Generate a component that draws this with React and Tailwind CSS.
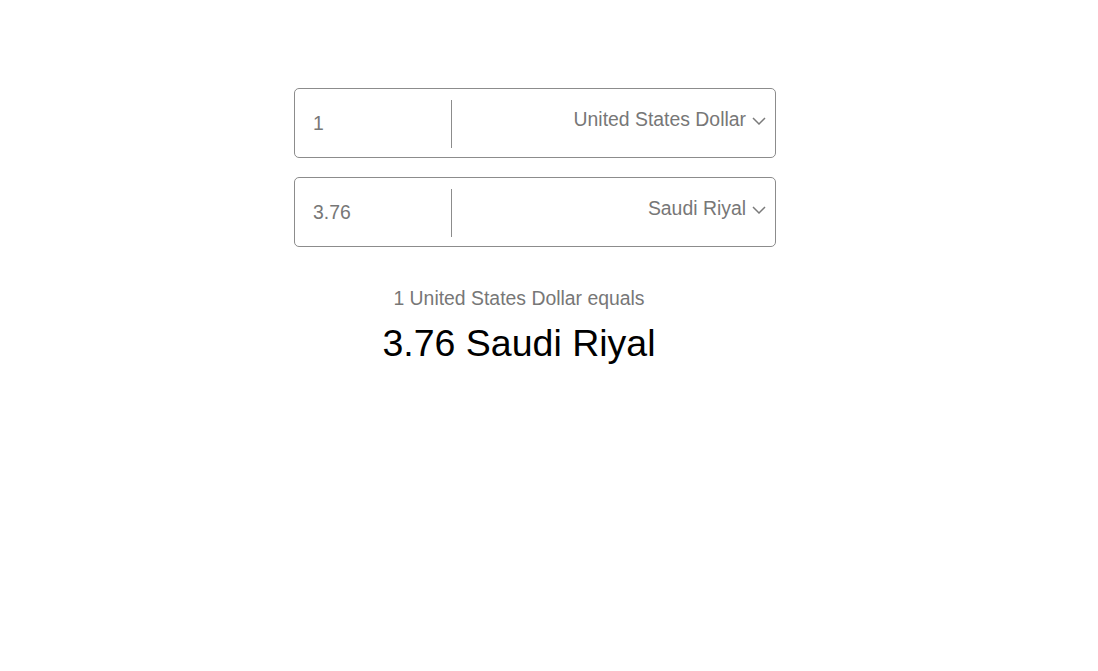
import { useState } from "react";

function Chevron() {
  return (
    <svg width="14" height="14" viewBox="0 0 14 14" fill="none" className="ml-[6px] mt-[1px]">
      <polyline points="1,4 7,10 13,4" stroke="#7a7a7a" strokeWidth="1.5" fill="none" />
    </svg>
  );
}

function Row({ amount, currency }) {
  return (
    <div className="flex h-[70px] w-[482px] rounded-[5px] border border-[#8c8c8c] bg-white">
      <div className="flex w-[156px] items-center pl-[18px] pt-[2px]">
        <input
          value={amount}
          readOnly
          className="w-full bg-transparent text-[19.4px] text-[#777] outline-none"
        />
      </div>
      <div className="mb-[9px] mt-[11px] border-l border-[#8c8c8c]" />
      <div className="flex flex-1 items-center justify-end pb-[6px] pr-[9px]">
        <span className="text-[19.4px] text-[#777]">{currency}</span>
        <Chevron />
      </div>
    </div>
  );
}

export default function App() {
  const [from] = useState({ amount: "1", currency: "United States Dollar" });
  const [to] = useState({ amount: "3.76", currency: "Saudi Riyal" });

  return (
    <div className="min-h-[671px] bg-white font-['Liberation_Sans',Arial,sans-serif]">
      <div className="ml-[294px] flex flex-col gap-[19px] pt-[88px]">
        <Row amount={from.amount} currency={from.currency} />
        <Row amount={to.amount} currency={to.currency} />
      </div>
      <div className="ml-[294px] mt-[39px] w-[450px] text-center">
        <p className="text-[19.4px] leading-[24px] text-[#777]">1 United States Dollar equals</p>
        <p className="mt-[11px] text-[37.5px] leading-[44px] text-black">3.76 Saudi Riyal</p>
      </div>
    </div>
  );
}
